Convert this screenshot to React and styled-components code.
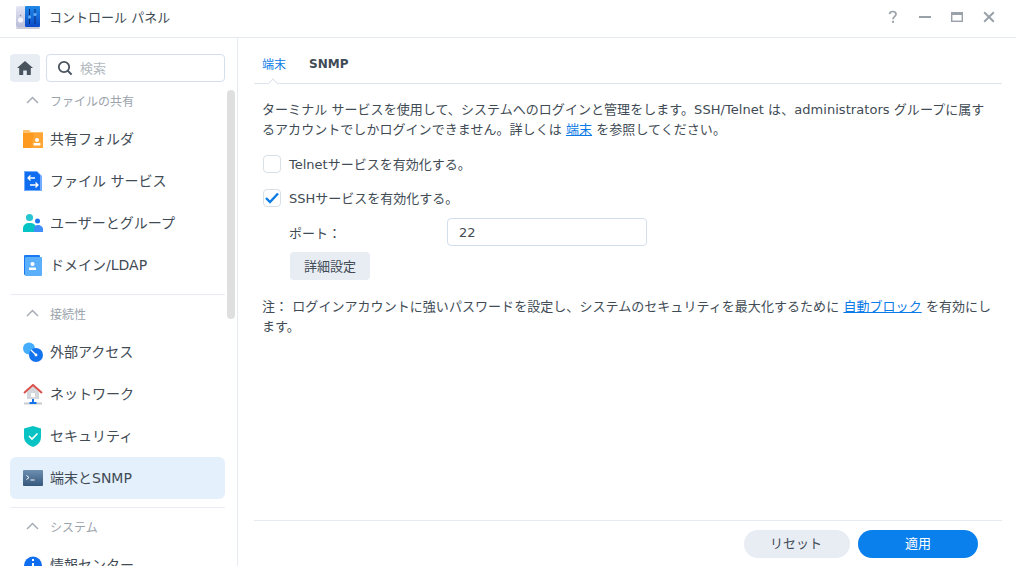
import React from 'react'
import styled, { createGlobalStyle } from 'styled-components'

const GlobalStyle = createGlobalStyle`
  html, body { margin: 0; padding: 0; background: #fff; }
  body {
    font-family: "DejaVu Sans", "Noto Sans CJK JP", sans-serif;
    font-size: 13px;
    color: #414b55;
  }
  * { box-sizing: border-box; }
`

const Window = styled.div`
  width: 1016px;
  height: 566px;
  display: flex;
  flex-direction: column;
  overflow: hidden;
`

const TitleBar = styled.header`
  height: 38px;
  flex: none;
  display: flex;
  align-items: center;
  padding: 0 20px 3px 16px;
  border-bottom: 1px solid #e6ebf2;
  svg { flex: none; }
`

const Title = styled.span`
  margin: 0 0 2px 9px;
  font-size: 13px;
  flex: 1;
`

const WinControls = styled.div`
  display: flex;
  align-items: center;
  gap: 18px;
  svg { display: block; }
`

const Body = styled.div`
  flex: 1;
  display: flex;
  min-height: 0;
`

const Sidebar = styled.aside`
  position: relative;
  width: 238px;
  flex: none;
  padding: 16px 12px 0 10px;
  border-right: 1px solid #e6ebf2;
  overflow: hidden;
`

const Scrollbar = styled.div`
  position: absolute;
  left: 227px;
  top: 52px;
  width: 8px;
  height: 229px;
  background: #dfdfdf;
  border-radius: 4px;
`

const SearchRow = styled.div`
  display: flex;
  gap: 6px;
  height: 28px;
`

const HomeButton = styled.div`
  width: 30px;
  background: #e8edf4;
  border-radius: 4px;
  display: flex;
  align-items: center;
  justify-content: center;
`

const SearchBox = styled.div`
  flex: 1;
  display: flex;
  align-items: center;
  gap: 7px;
  padding: 0 0 1px 10px;
  border: 1px solid #d3dfea;
  border-radius: 4px;
  color: #b3b9c0;
`

const Group = styled.section`
  border-top: ${p => (p.$first ? 'none' : '1px solid #e9edf3')};
  margin-top: ${p => (p.$first ? '2px' : '8px')};
  padding-top: ${p => (p.$first ? '0' : '2px')};
`

const GroupHeading = styled.div`
  height: 34px;
  display: flex;
  align-items: center;
  padding: 0 0 2px 16px;
  gap: 11px;
  color: #9ba3ac;
  font-size: 12px;
  svg { flex: none; }
`

const NavItem = styled.div`
  height: 42px;
  display: flex;
  align-items: center;
  padding: 0 0 2px 13px;
  gap: 6px;
  border-radius: 6px;
  font-size: 14px;
  background: ${p => (p.$active ? '#e4f0fc' : 'transparent')};
`

const IconSlot = styled.span`
  width: 21px;
  height: 21px;
  flex: none;
  display: block;
  margin-bottom: -2px;
  svg { display: block; }
`

const Main = styled.main`
  flex: 1;
  display: flex;
  flex-direction: column;
  padding: 0 14px 0 16px;
  min-width: 0;
`

const Tabs = styled.nav`
  position: relative;
  height: 46px;
  flex: none;
  display: flex;
  align-items: center;
  gap: 23px;
  padding: 6px 0 0 8px;
  border-bottom: 1px solid #dfe5ee;
`

const Tab = styled.span`
  font-size: 12px;
  font-weight: ${p => (p.$active ? 400 : 700)};
  color: ${p => (p.$active ? '#0a7ae6' : '#414b55')};
`

const TabNotch = styled.span`
  position: absolute;
  left: 15px;
  bottom: -1px;
  width: 8px;
  height: 8px;
  background: #fff;
  border-left: 1px solid #dfe5ee;
  border-top: 1px solid #dfe5ee;
  transform: translateY(4px) rotate(45deg);
`

const Content = styled.div`
  flex: 1;
  padding: 16px 0 0 8px;
`

const Paragraph = styled.p`
  margin: 0;
  line-height: 20px;
  letter-spacing: 0.05px;
  white-space: nowrap;
`

const DocLink = styled.a`
  color: #0a7ae6;
  text-decoration: underline;
`

const CheckRow = styled.label`
  height: 34px;
  display: flex;
  align-items: center;
  gap: 8px;
  padding-left: 1px;
  margin-top: ${p => p.$gap || 0}px;
`

const CheckText = styled.span`
  margin-bottom: 2px;
`

const Box = styled.span`
  width: 18px;
  height: 18px;
  border: 1px solid #d7dfe9;
  border-radius: 4px;
  display: flex;
  align-items: center;
  justify-content: center;
`

const FieldRow = styled.div`
  display: flex;
  align-items: center;
  height: 28px;
  margin: 3px 0 6px 27px;
`

const FieldLabel = styled.span`
  width: 158px;
`

const TextField = styled.div`
  width: 200px;
  height: 28px;
  display: flex;
  align-items: center;
  padding-left: 11px;
  border: 1px solid #d3dfea;
  border-radius: 4px;
`

const SecondaryButton = styled.div`
  width: 80px;
  height: 28px;
  margin-left: 28px;
  padding-bottom: 1px;
  display: flex;
  align-items: center;
  justify-content: center;
  background: #e8edf4;
  border-radius: 4px;
`

const Note = styled(Paragraph)`
  margin-top: 17px;
`

const Footer = styled.footer`
  height: 46px;
  flex: none;
  display: flex;
  justify-content: flex-end;
  gap: 8px;
  padding: 9px 24px 0 0;
  border-top: 1px solid #e6ebf2;
`

const PillButton = styled.div`
  width: ${p => (p.$primary ? '120px' : '106px')};
  height: 28px;
  padding: 0 ${p => (p.$primary ? '0' : '2px')} 4px 0;
  border-radius: 14px;
  display: flex;
  align-items: center;
  justify-content: center;
  background: ${p => (p.$primary ? '#0a80ec' : '#e8edf4')};
  color: ${p => (p.$primary ? '#fff' : '#414b55')};
`

const AppLogo = () => (
  <svg width="24" height="24" viewBox="0 0 24 24">
    <defs>
      <linearGradient id="logoBlue" x1="0" y1="0" x2="0" y2="1">
        <stop offset="0" stopColor="#1f8ae8" />
        <stop offset="1" stopColor="#0b49c8" />
      </linearGradient>
      <linearGradient id="logoGrey" x1="0" y1="0" x2="0" y2="1">
        <stop offset="0" stopColor="#e4e6f3" />
        <stop offset="1" stopColor="#b9bdd8" />
      </linearGradient>
    </defs>
    <rect x="0" y="22" width="24" height="2" rx="1" fill="#a9aec0" opacity=".6" />
    <rect x="0" y="1" width="10" height="21" rx="1.5" fill="url(#logoGrey)" />
    <rect x="9" y="1" width="15" height="21" rx="1" fill="url(#logoBlue)" />
    <circle cx="4.5" cy="15" r="2.6" fill="#f5f6fb" />
    <circle cx="4.5" cy="10.5" r=".8" fill="#8d93ac" />
    <path d="M13.5 4v15M19 4v15" stroke="#0a2c78" strokeWidth="1" />
    <circle cx="13.5" cy="12" r="1.7" fill="#58a8f2" />
    <circle cx="19" cy="9.5" r="1.7" fill="#58a8f2" />
  </svg>
)

const HelpIcon = () => (
  <svg width="14" height="14" viewBox="0 0 14 14">
    <path d="M3.500 4.200C3.700 2.400 5 1.500 6.800 1.500c1.900 0 3.200 1 3.200 2.700 0 2.400-3 2.400-3 5" fill="none" stroke="#9aa1a9" strokeWidth="1.700" />
    <rect x="6" y="10.800" width="2" height="2" fill="#9aa1a9" />
  </svg>
)

const MinimizeIcon = () => (
  <svg width="14" height="14" viewBox="0 0 14 14">
    <rect x="1" y="6" width="12" height="2" fill="#9aa1a9" />
  </svg>
)

const MaximizeIcon = () => (
  <svg width="14" height="14" viewBox="0 0 14 14">
    <rect x="1.700" y="2.700" width="10.600" height="8.600" fill="none" stroke="#9aa1a9" strokeWidth="1.400" />
    <rect x="1" y="2" width="12" height="3" fill="#9aa1a9" />
  </svg>
)

const CloseIcon = () => (
  <svg width="14" height="14" viewBox="0 0 14 14">
    <path d="M2.200 2.200l9.600 9.600M11.800 2.200l-9.600 9.600" stroke="#9aa1a9" strokeWidth="2" />
  </svg>
)

const HomeIcon = () => (
  <svg width="16" height="14" viewBox="0 0 16 14">
    <path d="M8 0L0 7h2.200v7h4v-4.500h3.600V14h4V7H16z" fill="#49535e" />
  </svg>
)

const SearchIcon = () => (
  <svg width="16" height="16" viewBox="0 0 16 16">
    <circle cx="7" cy="7" r="5.200" fill="none" stroke="#49535e" strokeWidth="1.800" />
    <path d="M10.800 10.800L14.600 14.600" stroke="#49535e" strokeWidth="2" />
  </svg>
)

const Chevron = () => (
  <svg width="13" height="8" viewBox="0 0 13 8">
    <path d="M1 7l5.500-5.500L12 7" fill="none" stroke="#a7adb5" strokeWidth="1.500" />
  </svg>
)

const FolderIcon = () => (
  <svg width="21" height="21" viewBox="0 0 21 21">
    <path d="M0 1h6l2 2h12v4H0z" fill="#ffc06e" />
    <rect x="0" y="4" width="20" height="15" fill="#ff9a20" />
    <path d="M11 4h9v15H8z" fill="#ffae45" opacity=".6" />
    <circle cx="14" cy="11" r="2" fill="#fff" />
    <rect x="10.500" y="14" width="7" height="2.400" rx=".6" fill="#fff" />
  </svg>
)

const FileServiceIcon = () => (
  <svg width="21" height="21" viewBox="0 0 21 21">
    <path d="M1 0h13l5 5v15H1z" fill="#72acff" />
    <path d="M2 1h12l3 3v15H2z" fill="#0f6ef0" />
    <path d="M12 7H5M7.500 4.500L5 7l2.500 2.500M7 14h8M12.500 11.500L15 14l-2.500 2.500" fill="none" stroke="#fff" strokeWidth="1.300" />
  </svg>
)

const UsersIcon = () => (
  <svg width="21" height="21" viewBox="0 0 21 21">
    <circle cx="6.500" cy="4.500" r="3.600" fill="#27c6d0" />
    <path d="M0 19v-3.500C0 12 2.500 10 6.500 10s7 2 7 5.500V19z" fill="#06c4c4" />
    <circle cx="14.500" cy="8" r="2.500" fill="#1c74f0" />
    <path d="M11 19v-3c0-2 1.300-4 3.900-4S20 14 20 16v3z" fill="#3f8efa" />
  </svg>
)

const DomainIcon = () => (
  <svg width="21" height="21" viewBox="0 0 21 21">
    <rect x="1" y="0" width="16" height="20" rx="1" fill="#1a78f2" />
    <rect x="2" y="2" width="17" height="19" rx="1" fill="#5cb0fb" />
    <circle cx="9.500" cy="9" r="2.100" fill="#fff" />
    <rect x="6" y="12.600" width="7" height="2.400" rx=".6" fill="#fff" />
  </svg>
)

const ExternalIcon = () => (
  <svg width="21" height="21" viewBox="0 0 21 21">
    <circle cx="6" cy="6.500" r="6" fill="#45aefc" />
    <circle cx="13" cy="13" r="7" fill="#1372ee" />
    <path d="M8 8l5 5" stroke="#fff" strokeWidth="1.300" />
    <circle cx="13" cy="13" r="1.400" fill="#fff" />
  </svg>
)

const NetworkIcon = () => (
  <svg width="21" height="21" viewBox="0 0 21 21">
    <path d="M4 8l6-5.500L16 8v7H4z" fill="#d3d6da" />
    <path d="M1 9l9-8 9 8" fill="none" stroke="#d8504a" strokeWidth="2" />
    <rect x="8" y="9" width="4" height="4" fill="#fff" />
    <rect x="1" y="18.500" width="18" height="2" fill="#c6cbd2" />
    <rect x="9" y="15" width="2" height="4" fill="#1674ea" />
    <rect x="6.500" y="18" width="7" height="2" fill="#1674ea" />
  </svg>
)

const ShieldIcon = () => (
  <svg width="21" height="21" viewBox="0 0 21 21">
    <path d="M10 0L18 2.500V11c0 5-3.500 8.500-8 10C5.500 19.500 1 16 1 11V2.500z" fill="#08c3c4" />
    <path d="M6 10l3 3 5.500-5.500" fill="none" stroke="#fff" strokeWidth="1.600" />
  </svg>
)

const TerminalIcon = () => (
  <svg width="21" height="21" viewBox="0 0 21 21">
    <defs>
      <linearGradient id="termFill" x1="0" y1="0" x2="0" y2="1">
        <stop offset="0" stopColor="#6d8fb0" />
        <stop offset="1" stopColor="#36587d" />
      </linearGradient>
    </defs>
    <rect x="0" y="2" width="20" height="16" rx="1" fill="url(#termFill)" />
    <path d="M3.500 7.500l2.500 2-2.500 2M7.500 12h4" fill="none" stroke="#fff" strokeWidth="1" />
  </svg>
)

const InfoIcon = () => (
  <svg width="21" height="21" viewBox="0 0 21 21">
    <circle cx="10" cy="10.500" r="9" fill="#0f6ef0" />
    <rect x="9" y="4" width="2" height="2" fill="#fff" />
    <rect x="9" y="8" width="2" height="8" fill="#fff" />
  </svg>
)

const CheckMark = () => (
  <svg width="14" height="12" viewBox="0 0 14 12">
    <path d="M1 6l4 4 8-8.500" fill="none" stroke="#0a7ae6" strokeWidth="2.400" />
  </svg>
)

const groups = [
  {
    name: 'ファイルの共有',
    items: [
      { label: '共有フォルダ', icon: <FolderIcon /> },
      { label: 'ファイル サービス', icon: <FileServiceIcon /> },
      { label: 'ユーザーとグループ', icon: <UsersIcon /> },
      { label: 'ドメイン/LDAP', icon: <DomainIcon /> },
    ],
  },
  {
    name: '接続性',
    items: [
      { label: '外部アクセス', icon: <ExternalIcon /> },
      { label: 'ネットワーク', icon: <NetworkIcon /> },
      { label: 'セキュリティ', icon: <ShieldIcon /> },
      { label: '端末とSNMP', icon: <TerminalIcon />, active: true },
    ],
  },
  {
    name: 'システム',
    items: [{ label: '情報センター', icon: <InfoIcon /> }],
  },
]

export default function App() {
  return (
    <Window>
      <GlobalStyle />
      <TitleBar>
        <AppLogo />
        <Title>コントロール パネル</Title>
        <WinControls>
          <HelpIcon />
          <MinimizeIcon />
          <MaximizeIcon />
          <CloseIcon />
        </WinControls>
      </TitleBar>
      <Body>
        <Sidebar>
          <SearchRow>
            <HomeButton><HomeIcon /></HomeButton>
            <SearchBox>
              <SearchIcon />
              検索
            </SearchBox>
          </SearchRow>
          {groups.map((group, i) => (
            <Group key={group.name} $first={i === 0}>
              <GroupHeading>
                <Chevron />
                {group.name}
              </GroupHeading>
              {group.items.map(item => (
                <NavItem key={item.label} $active={item.active}>
                  <IconSlot>{item.icon}</IconSlot>
                  {item.label}
                </NavItem>
              ))}
            </Group>
          ))}
          <Scrollbar />
        </Sidebar>
        <Main>
          <Tabs>
            <Tab $active>端末</Tab>
            <Tab>SNMP</Tab>
            <TabNotch />
          </Tabs>
          <Content>
            <Paragraph>
              ターミナル サービスを使用して、システムへのログインと管理をします。SSH/Telnet は、administrators グループに属す
              <br />
              るアカウントでしかログインできません。詳しくは <DocLink>端末</DocLink> を参照してください。
            </Paragraph>
            <CheckRow $gap={7}>
              <Box />
              <CheckText>Telnetサービスを有効化する。</CheckText>
            </CheckRow>
            <CheckRow>
              <Box><CheckMark /></Box>
              <CheckText>SSHサービスを有効化する。</CheckText>
            </CheckRow>
            <FieldRow>
              <FieldLabel>ポート：</FieldLabel>
              <TextField>22</TextField>
            </FieldRow>
            <SecondaryButton>詳細設定</SecondaryButton>
            <Note>
              注： ログインアカウントに強いパスワードを設定し、システムのセキュリティを最大化するために <DocLink>自動ブロック</DocLink> を有効にし
              <br />
              ます。
            </Note>
          </Content>
          <Footer>
            <PillButton>リセット</PillButton>
            <PillButton $primary>適用</PillButton>
          </Footer>
        </Main>
      </Body>
    </Window>
  )
}
